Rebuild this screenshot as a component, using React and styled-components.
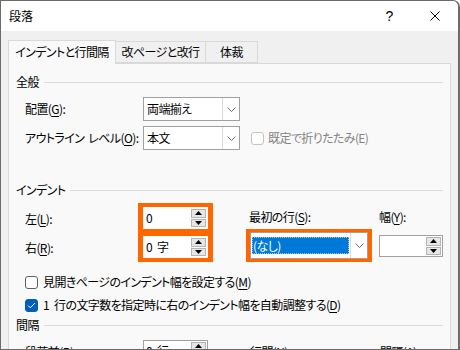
import styled, { createGlobalStyle } from "styled-components";

const Global = createGlobalStyle`
  html, body {
    margin: 0;
    padding: 0;
    background: #ffffff;
  }
  body {
    font-family: "Noto Sans CJK JP", "Noto Sans", sans-serif;
    font-size: 12px;
    font-feature-settings: "palt";
    letter-spacing: -0.6px;
    color: #000;
  }
`;

const Window = styled.div`
  width: 460px;
  height: 350px;
  box-sizing: border-box;
  border: 1px solid #6b6b6b;
  border-right-width: 2px;
  border-top-right-radius: 7px;
  background: #f0f0f0;
  overflow: hidden;
  display: flex;
  flex-direction: column;
`;

const TitleBar = styled.div`
  height: 30px;
  flex-shrink: 0;
  background: #ffffff;
  display: flex;
  align-items: center;
  padding-left: 8px;
`;

const Title = styled.div`
  flex: 1;
  font-size: 12px;
  line-height: 16px;
  letter-spacing: 0;
`;

const TitleButton = styled.div`
  width: 46px;
  height: 30px;
  display: flex;
  align-items: center;
  justify-content: center;
  font-family: "Liberation Sans", sans-serif;
  font-size: 14px;
`;

const Body = styled.div`
  padding: 9px 6px 0 7px;
`;

const Tabs = styled.div`
  display: flex;
  align-items: flex-end;
  height: 23px;
  position: relative;
  z-index: 1;
`;

const Tab = styled.div`
  width: ${(p) => p.w}px;
  box-sizing: border-box;
  height: ${(p) => (p.active ? 24 : 22)}px;
  margin-bottom: ${(p) => (p.active ? -1 : 0)}px;
  background: ${(p) => (p.active ? "#f9f9f9" : "#f0f0f0")};
  border: 1px solid #d9d9d9;
  border-bottom: ${(p) => (p.active ? "none" : "1px solid #d9d9d9")};
  border-left: ${(p) => (p.first ? "1px solid #d9d9d9" : "none")};
  display: flex;
  align-items: center;
  justify-content: center;
  line-height: 16px;
  padding-bottom: ${(p) => (p.active ? 1 : 0)}px;
`;

const Panel = styled.div`
  width: 443px;
  height: 300px;
  box-sizing: border-box;
  border: 1px solid #d9d9d9;
  background: #f9f9f9;
  padding: 10px 6px 0 7px;
  display: flex;
  flex-direction: column;
`;

const Header = styled.div`
  display: flex;
  align-items: center;
  gap: 5px;
  line-height: 16px;
  margin-top: ${(p) => p.mt || 0}px;

  &::after {
    content: "";
    flex: 1;
    height: 1px;
    background: #dcdcdc;
    margin-right: 1px;
  }
`;

const Row = styled.div`
  display: flex;
  align-items: center;
  padding-left: 9px;
  margin-top: ${(p) => p.mt || 0}px;
`;

const Label = styled.div`
  width: ${(p) => p.w || 118}px;
  box-sizing: border-box;
  flex-shrink: 0;
  line-height: 16px;
  white-space: nowrap;
  color: ${(p) => (p.disabled ? "#8a8a8a" : "#000")};
`;

const Sp = styled.span`
  display: inline-block;
  width: ${(p) => p.w || 4}px;
`;

const Combo = styled.div`
  width: ${(p) => p.w || 97}px;
  height: ${(p) => p.h || 24}px;
  flex-shrink: 0;
  box-sizing: border-box;
  border: 1px solid #a0a0a0;
  background: #fff;
  display: flex;
  align-items: stretch;
`;

const ComboText = styled.div`
  flex: 1;
  display: flex;
  align-items: center;
  padding-left: 3px;
  line-height: 16px;
`;

const Selected = styled.div`
  flex: 1;
  margin: 4px 1px 4px 1px;
  background: #0078d7;
  color: #fff;
  display: flex;
  align-items: center;
  padding-left: 1px;
  outline: 1px dotted #9ecbf0;
  outline-offset: -1px;
`;

const ComboArrow = styled.div`
  width: 16px;
  border-left: 1px solid #dadada;
  display: flex;
  align-items: center;
  justify-content: center;
`;

const Chevron = () => (
  <svg width="9" height="5" viewBox="0 0 9 5">
    <polyline points="0.5,0.5 4.5,4.5 8.5,0.5" fill="none" stroke="#707070" strokeWidth="1" />
  </svg>
);

const CheckBox = styled.div`
  width: 13px;
  height: 13px;
  box-sizing: border-box;
  border-radius: 3px;
  flex-shrink: 0;
  border: 1px solid ${(p) => (p.disabled ? "#c4c4c4" : p.checked ? "#005fb8" : "#5f5f5f")};
  background: ${(p) => (p.checked ? "#005fb8" : "#fff")};
  display: flex;
  align-items: center;
  justify-content: center;
  margin-left: ${(p) => p.ml || 0}px;
  margin-right: ${(p) => p.mr || 5}px;
`;

const CheckText = styled.div`
  line-height: 16px;
  white-space: nowrap;
  color: ${(p) => (p.disabled ? "#838383" : "#000")};
`;

const Tick = () => (
  <svg width="9" height="7" viewBox="0 0 9 7">
    <polyline points="1,3.5 3.3,5.8 8,1" fill="none" stroke="#fff" strokeWidth="1" />
  </svg>
);

const Indent = styled.div`
  display: flex;
  padding-left: 9px;
  margin-top: 5px;
`;

const LeftLabels = styled.div`
  width: 113px;
  flex-shrink: 0;
  display: flex;
  flex-direction: column;
  padding-top: 4px;
  gap: 5px;
`;

const LabelCell = styled.div`
  height: 24px;
  display: flex;
  align-items: center;
  line-height: 16px;
`;

const Highlight = styled.div`
  background: #ff6600;
  flex-shrink: 0;
  padding: ${(p) => p.pad || "4px 5px"};
  display: flex;
  flex-direction: column;
  gap: ${(p) => p.gap || 0}px;
  align-self: flex-start;
  margin-top: ${(p) => p.mt || 0}px;
`;

const Column = styled.div`
  flex-shrink: 0;
  display: flex;
  flex-direction: column;
  margin-left: ${(p) => p.ml || 0}px;
  padding-top: 6px;
`;

const SpinBox = styled.div`
  width: ${(p) => p.w || 65}px;
  height: ${(p) => p.h || 22}px;
  flex-shrink: 0;
  box-sizing: border-box;
  border: 1px solid ${(p) => p.border || "#ffffff"};
  background: #fff;
  display: flex;
  align-items: center;
  margin-top: ${(p) => p.mt || 0}px;
`;

const SpinText = styled.div`
  flex: 1;
  padding-left: 2px;
  line-height: 16px;
  white-space: nowrap;
`;

const Unit = styled.span`
  margin-left: 5px;
`;

const Spinner = styled.div`
  width: 16px;
  height: 100%;
  display: flex;
  flex-direction: column;
  box-sizing: border-box;
  padding: 1px 1px 1px 0;
  gap: 1px;
`;

const SpinButton = styled.div`
  flex: 1;
  background: #e6e6e6;
  border: 1px solid #b4b4b4;
  display: flex;
  align-items: center;
  justify-content: center;
`;

const Triangle = ({ down }) => (
  <svg width="7" height="4" viewBox="0 0 7 4">
    <polygon points={down ? "0,0 7,0 3.5,4" : "0,4 7,4 3.5,0"} fill="#000" />
  </svg>
);

const Spin = ({ value, unit, ...rest }) => (
  <SpinBox {...rest}>
    <SpinText>
      {value}
      {unit && <Unit>{unit}</Unit>}
    </SpinText>
    <Spinner>
      <SpinButton><Triangle /></SpinButton>
      <SpinButton><Triangle down /></SpinButton>
    </Spinner>
  </SpinBox>
);

const U = styled.span`
  text-decoration: underline;
  text-underline-offset: 2px;
`;

export default function App() {
  return (
    <>
      <Global />
      <Window>
        <TitleBar>
          <Title>段落</Title>
          <TitleButton>?</TitleButton>
          <TitleButton>
            <svg width="10" height="10" viewBox="0 0 10 10">
              <path d="M0.5 0.5 L9.5 9.5 M9.5 0.5 L0.5 9.5" stroke="#000" strokeWidth="1" />
            </svg>
          </TitleButton>
        </TitleBar>
        <Body>
          <Tabs>
            <Tab active first w={108}>インデントと行間隔</Tab>
            <Tab w={90}>改ページと改行</Tab>
            <Tab w={52}>体裁</Tab>
          </Tabs>
          <Panel>
            <Header>全般</Header>
            <Row mt={7}>
              <Label>配置(<U>G</U>):</Label>
              <Combo>
                <ComboText>両端揃え</ComboText>
                <ComboArrow><Chevron /></ComboArrow>
              </Combo>
            </Row>
            <Row mt={5}>
              <Label>アウトライン<Sp w={4} />レベル(<U>O</U>):</Label>
              <Combo>
                <ComboText>本文</ComboText>
                <ComboArrow><Chevron /></ComboArrow>
              </Combo>
              <CheckBox disabled ml={11} mr={4} />
              <CheckText disabled>既定で折りたたみ(E)</CheckText>
            </Row>

            <Header mt={32}>インデント</Header>
            <Indent>
              <LeftLabels>
                <LabelCell>左(<U>L</U>):</LabelCell>
                <LabelCell>右(<U>R</U>):</LabelCell>
              </LeftLabels>
              <Highlight pad="4px 5px" gap={7}>
                <Spin value="0" />
                <Spin value="0" unit="字" />
              </Highlight>
              <Column ml={33}>
                <Label w={127} style={{ paddingLeft: 3 }}>最初の行(<U>S</U>):</Label>
                <Highlight pad="3px 4px" mt={4}>
                  <Combo w={118} h={27}>
                    <Selected>(なし)</Selected>
                    <ComboArrow><Chevron /></ComboArrow>
                  </Combo>
                </Highlight>
              </Column>
              <Column ml={6}>
                <Label w={64}>幅(<U>Y</U>):</Label>
                <Spin value="" w={64} border="#a0a0a0" mt={10} />
              </Column>
            </Indent>

            <Row mt={12}>
              <CheckBox />
              <CheckText>見開きページのインデント幅を設定する(<U>M</U>)</CheckText>
            </Row>
            <Row mt={7}>
              <CheckBox checked><Tick /></CheckBox>
              <CheckText>1<Sp w={5} />行の文字数を指定時に右のインデント幅を自動調整する(<U>D</U>)</CheckText>
            </Row>

            <Header mt={4}>間隔</Header>
            <Row mt={7} style={{ alignItems: "flex-start" }}>
              <Label style={{ paddingTop: 4 }}>段落前(<U>B</U>):</Label>
              <Spin value="0" unit="行" w={65} border="#a0a0a0" />
              <Label w={172} style={{ paddingTop: 4, paddingLeft: 42 }}>行間(<U>N</U>):</Label>
              <Label w={64} style={{ paddingTop: 4 }}>間隔(<U>A</U>):</Label>
            </Row>
          </Panel>
        </Body>
      </Window>
    </>
  );
}
